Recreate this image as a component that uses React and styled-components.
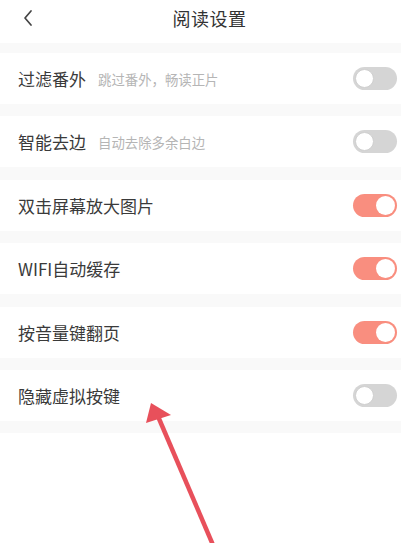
import React, { useState } from 'react';
import styled, { createGlobalStyle } from 'styled-components';

const GlobalStyle = createGlobalStyle`
  html, body {
    margin: 0;
    padding: 0;
    background: #ffffff;
  }
  body {
    font-family: "Noto Sans CJK SC", "Noto Sans", sans-serif;
  }
`;

const settings = [
  { label: '过滤番外', desc: '跳过番外，畅读正片', on: false },
  { label: '智能去边', desc: '自动去除多余白边', on: false },
  { label: '双击屏幕放大图片', on: true },
  { label: 'WIFI自动缓存', on: true },
  { label: '按音量键翻页', on: true },
  { label: '隐藏虚拟按键', on: false },
];

export default function App() {
  const [items, setItems] = useState(settings);
  const toggle = (i) => {
    setItems(items.map((it, idx) => (idx === i ? { ...it, on: !it.on } : it)));
  };
  return (
    <Page>
      <GlobalStyle />
      <Header>
        <BackButton>
          <svg width="12" height="18" viewBox="0 0 12 18">
            <path d="M9 2 L3 9 L9 16" fill="none" stroke="#444" strokeWidth="1.7" strokeLinecap="round" strokeLinejoin="round" />
          </svg>
        </BackButton>
        <Title>阅读设置</Title>
      </Header>
      <List>
        {items.map((it, i) => (
          <Row key={it.label}>
            <Label>{it.label}</Label>
            {it.desc && <Desc>{it.desc}</Desc>}
            <Switch $on={it.on} onClick={() => toggle(i)}>
              <Knob $on={it.on} />
            </Switch>
          </Row>
        ))}
      </List>
      <Arrow width="419" height="543" viewBox="0 0 419 543">
        <line x1="157" y1="414" x2="213" y2="545" stroke="#e8505b" strokeWidth="4.5" />
        <polygon points="151,403 146,423 171,415" fill="#e8505b" />
      </Arrow>
    </Page>
  );
}

const Page = styled.div`
  position: relative;
  width: 419px;
  height: 543px;
  overflow: hidden;
  background: #fff;
`;

const Header = styled.div`
  height: 43px;
  display: flex;
  align-items: center;
  justify-content: center;
  position: relative;
`;

const BackButton = styled.div`
  position: absolute;
  left: 22px;
  top: 9px;
  display: flex;
`;

const Title = styled.div`
  font-size: 18px;
  color: #333;
  margin-top: -7px;
  letter-spacing: 0.5px;
`;

const List = styled.div`
  width: 401px;
  background: #f9f9f9;
  padding: 10px 0 12px;
  display: flex;
  flex-direction: column;
  gap: 12.4px;
`;

const Row = styled.div`
  height: 51px;
  background: #fff;
  display: flex;
  align-items: center;
  padding: 0 4px 0 18px;
`;

const Label = styled.span`
  font-size: 17px;
  color: #3a3a3a;
`;

const Desc = styled.span`
  font-size: 13.4px;
  color: #b5b5b5;
  margin-left: 12px;
`;

const Switch = styled.div`
  margin-left: auto;
  width: 44px;
  height: 23px;
  border-radius: 12px;
  background: ${(p) => (p.$on ? '#f98e7f' : '#d5d5d5')};
  position: relative;
  cursor: pointer;
  box-sizing: border-box;
`;

const Knob = styled.div`
  position: absolute;
  top: 2px;
  left: ${(p) => (p.$on ? '23px' : '2px')};
  width: 19px;
  height: 19px;
  border-radius: 50%;
  background: #fff;
  box-sizing: border-box;
  border: ${(p) => (p.$on ? 'none' : '1px solid #cfcfcf')};
`;

const Arrow = styled.svg`
  position: absolute;
  left: 0;
  top: 0;
  pointer-events: none;
`;
